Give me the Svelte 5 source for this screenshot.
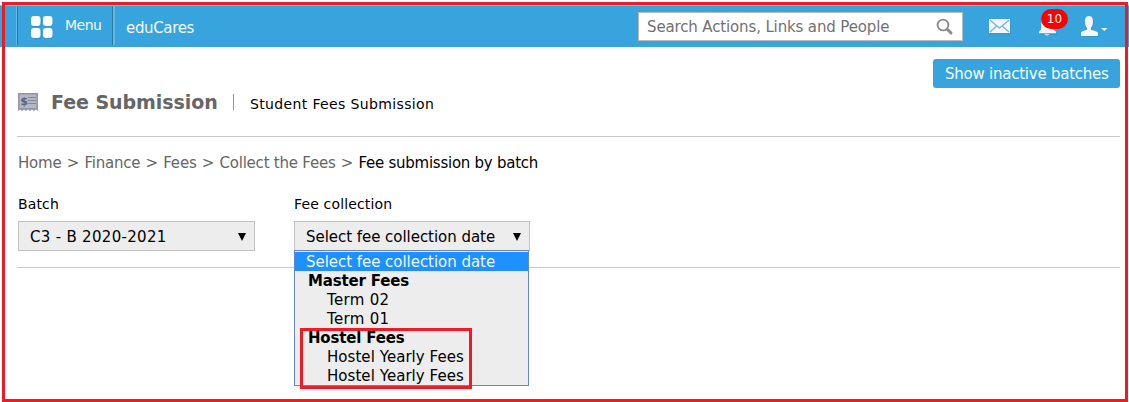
<script>
  const crumbs = ['Home', 'Finance', 'Fees', 'Collect the Fees'];
  const groups = [
    { label: 'Master Fees', options: ['Term 02', 'Term 01'] },
    { label: 'Hostel Fees', options: ['Hostel Yearly Fees', 'Hostel Yearly Fees'] }
  ];
</script>

<div class="page">
  <header>
    <button class="menu">
      <svg width="22" height="23" viewBox="0 0 22 23">
        <g fill="#2d8dc0" opacity=".5"><rect x="1" y="1" width="10" height="10" rx="3"/><rect x="12" y="1" width="10" height="10" rx="3"/><rect x="1" y="13" width="10" height="10" rx="3"/><rect x="12" y="13" width="10" height="10" rx="3"/></g>
        <g fill="#fff"><rect width="9.500" height="10" rx="3"/><rect x="12" width="9.500" height="10" rx="3"/><rect y="12" width="9.500" height="10" rx="3"/><rect x="12" y="12" width="9.500" height="10" rx="3"/></g>
      </svg>
      <span>Menu</span>
    </button>
    <span class="brand">eduCares</span>
    <div class="search">
      <span>Search Actions, Links and People</span>
      <svg width="18" height="18" viewBox="0 0 18 18" fill="none" stroke="#8c8c8c"><circle cx="7" cy="7" r="5.400" stroke-width="1.900"/><path d="M11.300 11.300 15 15" stroke-width="3" stroke-linecap="round"/></svg>
    </div>
    <svg class="mail" width="22" height="16" viewBox="0 0 22 16"><rect x="1" y="1" width="21" height="14.500" fill="#2d8dc0" opacity=".5"/><rect width="21" height="14" fill="#f5f6f7"/><path d="M1 1.200 10.500 9 20 1.200M1 13 7.800 7M20 13l-6.800-6" fill="none" stroke="#75b1d3" stroke-width="1.200"/></svg>
    <div class="bell">
      <svg width="20" height="22" viewBox="0 0 20 22"><path d="M2 18.500h17v1.500H2z" fill="#2d8dc0" opacity=".6"/><path d="M1 18.300v-1.500l2.200-2.600V8c0-3.500 2.300-6 5.800-6s6 2.500 6 6v6.200l3 2.600v1.500zM6.500 19.300h5c-.5 1.500-4.500 1.500-5 0z" fill="#f5f6f7"/></svg>
      <span class="badge">10</span>
    </div>
    <svg class="user" width="28" height="22" viewBox="0 0 28 22"><path d="M1 21v-3.300c0-1.200 2.500-2.100 6-3.200v-2C5.500 11 5 8.600 5 6c0-3.400 1.500-5 4-5s4 1.600 4 5c0 2.600-.5 5-2 6.500v2c4 1.100 7 2 7 3.200V21z" fill="#2d8dc0" opacity=".5"/><path d="M0 20v-3c0-1.400 2.500-2.200 6-3.300v-2C4.500 10.200 4 8 4 5c0-3.300 1.400-5 4-5s4 1.700 4 5c0 3-.5 5.200-2 6.700v2c4 1.100 7 1.900 7 3.300v3z" fill="#f5f6f7"/><path d="M20 12h6.500l-3.200 3z" fill="#f5f6f7"/></svg>
  </header>

  <main>
    <div class="title">
      <svg class="receipt" width="20" height="18" viewBox="0 0 20 18"><path d="M0 0h20v18l-2-1.500-2 1.500-2-1.500-2 1.500-2-1.500L8 18l-2-1.500L4 18l-2-1.500L0 18z" fill="#9495a8"/><path d="M1.500 1.500h17v13.500h-17z" fill="#b5b6c3"/><path d="M10 4.500h8M10 7.500h8M10 10.500h8" stroke="#85869b"/><text x="2.300" y="12" class="dollar">$</text></svg>
      <h1>Fee Submission</h1>
      <i class="bar"></i>
      <span class="sub">Student Fees Submission</span>
      <button class="inactive">Show inactive batches</button>
    </div>
    <nav>
      {#each crumbs as c}<span>{c}</span><span class="gt">&gt;</span>{/each}<span class="here">Fee submission by batch</span>
    </nav>
    <section>
      <div class="field">
        <span class="label">Batch</span>
        <div class="select"><span class="batch">C3 - B 2020-2021</span><i class="arrow"></i></div>
      </div>
      <div class="field fee">
        <span class="label">Fee collection</span>
        <div class="select"><span>Select fee collection date</span><i class="arrow"></i></div>
        <div class="list">
          <div class="selected"><span>Select fee collection date</span></div>
          {#each groups as g}
            <div class="group"><span>{g.label}</span></div>
            {#each g.options as o}<div class="option" class:short={o.length < 10}><span>{o}</span></div>{/each}
          {/each}
          <div class="mark"></div>
        </div>
      </div>
    </section>
  </main>
  <div class="outline"></div>
</div>

<style>
  :global(body) { margin: 0; background: #fff; }
  .page { position: relative; box-sizing: border-box; width: 1129px; height: 402px; padding-top: 5px; overflow: hidden; font: 15px/19px "DejaVu Sans", Verdana, sans-serif; color: #000; }
  button { font: inherit; border: 0; padding: 0; margin: 0; text-align: left; }
  span, h1, button { white-space: nowrap; }
  header { box-sizing: border-box; height: 42px; border-top: 1px solid #86c6e9; background: #38a4dd; display: flex; color: #f3f8fb; padding-left: 17px; }
  header svg { display: block; flex: none; }
  .menu { box-sizing: border-box; display: flex; width: 98px; height: 39px; padding: 10px 0 0 13px; background: none; color: inherit; border-left: 2px solid #28799f; border-left-width: 1px; border-right: 2px solid #65b9e4; box-shadow: -1px 0 #65b9e4, inset -1px 0 #28799f; font-size: 14px; }
  .menu span { margin: 0 0 0 12px; letter-spacing: -.5px; }
  .brand { width: 512px; margin: 13px 0 0 11px; font-size: 15px; letter-spacing: -.35px; }
  .search { box-sizing: border-box; display: flex; justify-content: space-between; width: 325px; height: 29px; margin-top: 6px; padding: 5px 8px 0; border: 1px solid #b9b9b9; background: #fff; color: #717171; letter-spacing: -.14px; }
  .mail { margin: 13px 0 0 26px; }
  .bell { position: relative; margin: 9px 0 0 27px; }
  .badge { position: absolute; left: 3px; top: -6px; width: 27px; height: 20px; border-radius: 10px; background: #f00; color: #fff; font-size: 12px; line-height: 20px; text-align: center; }
  .user { margin: 10px 0 0 23px; }
  main { padding: 0 9px 0 17px; }
  .title { box-sizing: border-box; display: flex; height: 90px; border-bottom: 1px solid #c8c8c8; }
  .receipt { flex: none; margin: 46px 0 0 1px; }
  .dollar { font: bold 11px "DejaVu Sans", sans-serif; fill: #5d5e78; }
  h1 { width: 182px; margin: 43px 0 0 13px; font-size: 19px; line-height: 24px; color: #666; letter-spacing: -.05px; }
  .bar { width: 1px; height: 16px; margin-top: 47px; background: #8e94a8; }
  .sub { margin: 48px 0 0 16px; font-size: 14px; letter-spacing: .36px; }
  .inactive { box-sizing: border-box; width: 187px; height: 29px; margin: 12px 0 0 auto; padding: 2px 0 0 12px; border-radius: 3px; background: #38a4dd; color: #f7fbfd; letter-spacing: -.24px; }
  nav { display: flex; height: 19px; padding: 17px 0 0 1px; color: #666; letter-spacing: -.22px; }
  .gt { width: 23px; text-align: center; }
  .here { color: #000; letter-spacing: -.26px; }
  section { box-sizing: border-box; display: flex; gap: 39px; height: 95px; border-bottom: 1px solid #c8c8c8; padding: 22px 0 0 1px; }
  .field { position: relative; width: 237px; }
  .label { display: block; height: 26px; font-size: 14px; letter-spacing: .15px; }
  .select { box-sizing: border-box; display: flex; justify-content: space-between; height: 30px; padding: 6px 8px 0 11px; border: 1px solid #c2c2c2; background: #ededed; letter-spacing: -.04px; }
  .fee { width: 236px; }
  .batch { letter-spacing: .3px; }
  .arrow { width: 8px; height: 8px; margin-top: 5px; background: #000; clip-path: polygon(0 0, 100% 0, 50% 100%); }
  .list { position: absolute; z-index: 1; left: 0; top: 55px; box-sizing: border-box; width: 235px; height: 136px; border: 1px solid #6588c4; background: #ededed; padding-top: 1px; }
  .selected { height: 19px; line-height: 21px; padding-left: 11px; background: #1e90ff; color: #f1f7ff; letter-spacing: -.04px; }
  .group { height: 19px; line-height: 21px; padding-left: 13px; font-weight: bold; letter-spacing: -.18px; }
  .option { height: 19px; line-height: 21px; padding-left: 32px; letter-spacing: .05px; }
  .option.short { letter-spacing: .3px; }
  .mark { position: absolute; left: 5px; top: 77px; width: 166px; height: 55px; border: 3px solid #ed1c24; }
  .outline { position: absolute; z-index: 2; left: 2px; top: 2px; box-sizing: border-box; width: 1126px; height: 400px; border: 3px solid #ed1c24; pointer-events: none; }
</style>
